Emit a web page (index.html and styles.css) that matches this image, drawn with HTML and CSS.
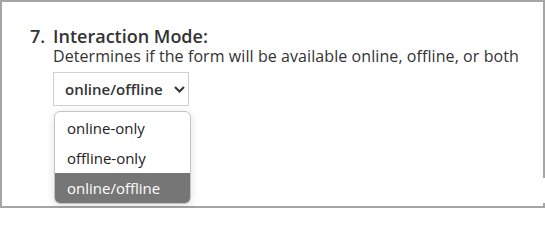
FILE: index.html
```html
<!DOCTYPE html>
<html lang="en">
<head>
<meta charset="utf-8">
<title>Interaction Mode</title>
<link rel="stylesheet" href="styles.css">
</head>
<body>
<div class="frame">
  <div class="question">
    <span class="num">7.</span>
    <div class="body">
      <div class="title">Interaction Mode:</div>
      <div class="desc">Determines if the form will be available online, offline, or both</div>
      <div class="select">
        <span class="value">online/offline</span>
        <svg class="chev" width="11" height="7" viewBox="0 0 11 7"><polyline points="1,1 5.5,5.5 10,1" fill="none" stroke="#333" stroke-width="2"/></svg>
      </div>
    </div>
  </div>
  <ul class="menu">
    <li class="opt">online-only</li>
    <li class="opt">offline-only</li>
    <li class="opt selected">online/offline</li>
  </ul>
</div>
</body>
</html>
```

FILE: styles.css
```css
html, body {
  margin: 0;
  padding: 0;
  background: #fff;
}
body {
  font-family: "Open Sans", "Liberation Sans", sans-serif;
  color: #333;
}
.frame {
  position: relative;
  box-sizing: border-box;
  width: 545px;
  height: 208px;
  border: 2px solid #a5a5a5;
  padding: 23px 0 0 28px;
}
.frame::after {
  content: "";
  position: absolute;
  right: -2px;
  top: 176px;
  width: 2px;
  height: 25px;
  background: #fff;
}
.question {
  display: flex;
}
.num {
  width: 23px;
  font-size: 18px;
  font-weight: 600;
  line-height: 22px;
}
.body {
  display: flex;
  flex-direction: column;
  align-items: flex-start;
}
.title {
  font-size: 18px;
  font-weight: 600;
  line-height: 22px;
}
.desc {
  font-size: 16px;
  line-height: 20px;
  margin-top: -1px;
  letter-spacing: 0.08px;
}
.select {
  margin-top: 6px;
  box-sizing: border-box;
  width: 136px;
  height: 34px;
  border: 1px solid #d0d0d0;
  display: flex;
  align-items: center;
  justify-content: space-between;
  padding: 0 3px 0 11px;
}
.value {
  font-size: 15px;
  font-weight: 600;
  line-height: 20px;
}
.menu {
  position: absolute;
  left: 52px;
  top: 109px;
  width: 135px;
  margin: 0;
  padding: 1px 0 0;
  list-style: none;
  background: #fff;
  border: 1px solid #c4c4c4;
  border-radius: 6px;
  overflow: hidden;
  box-shadow: 0 2px 10px rgba(0,0,0,0.12);
}
.opt {
  font-size: 15px;
  line-height: 30px;
  padding-left: 12px;
  color: #222;
}
.opt.selected {
  background: #767676;
  color: #fff;
}
```
